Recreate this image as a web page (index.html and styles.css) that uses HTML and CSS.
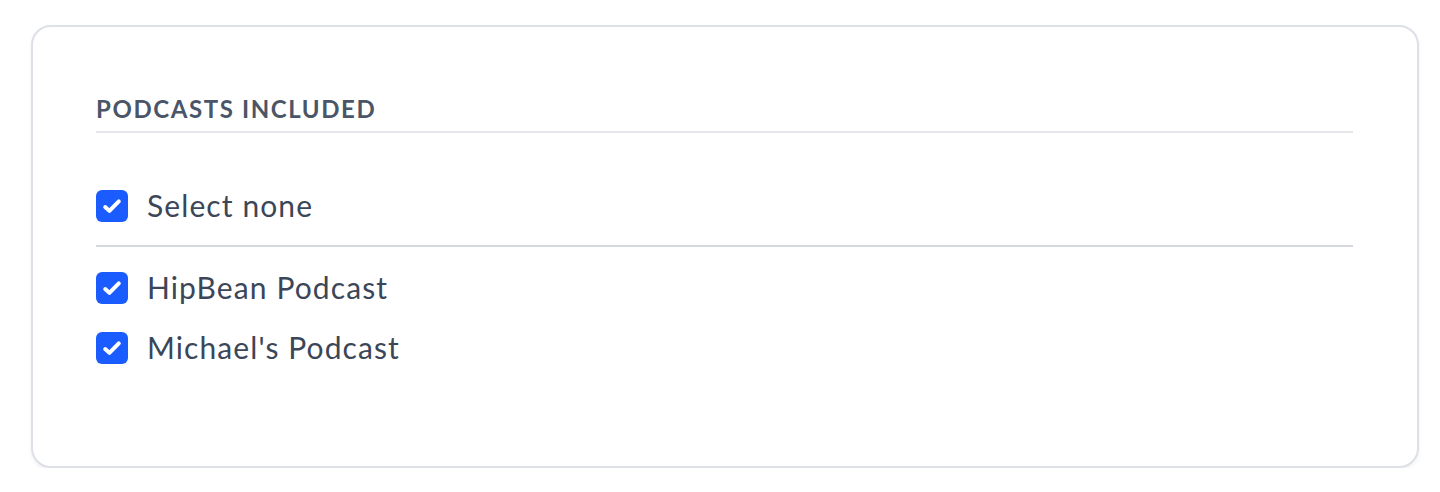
FILE: index.html
```html
<!DOCTYPE html>
<html lang="en">
<head>
  <meta charset="UTF-8">
  <title>Podcasts Included</title>
  <link rel="stylesheet" href="styles.css">
</head>
<body>

<div class="card">
  <h2 class="section-title">Podcasts Included</h2>

  <!-- Toggle all -->
  <label class="option option-all">
    <span class="checkbox">
      <svg viewBox="0 0 32 32" width="32" height="32"><path d="M9.2 17 L13.4 20.9 L22.8 11.4"/></svg>
    </span>
    <span class="option-label">Select none</span>
  </label>

  <div class="option-list">
    <label class="option">
      <span class="checkbox">
        <svg viewBox="0 0 32 32" width="32" height="32"><path d="M9.2 17 L13.4 20.9 L22.8 11.4"/></svg>
      </span>
      <span class="option-label">HipBean Podcast</span>
    </label>
    <label class="option">
      <span class="checkbox">
        <svg viewBox="0 0 32 32" width="32" height="32"><path d="M9.2 17 L13.4 20.9 L22.8 11.4"/></svg>
      </span>
      <span class="option-label">Michael's Podcast</span>
    </label>
  </div>
</div>

</body>
</html>
```

FILE: styles.css
```css
body {
  margin: 0;
  background-color: #ffffff;
  font-family: Lato, "Open Sans", Arial, sans-serif;
}

.card {
  box-sizing: border-box;
  height: 443px;
  margin: 25px 21px 0 31px;
  padding: 0 64px 0 63px;
  background-color: #ffffff;
  border: 2px solid #dde1e7;
  border-radius: 20px;
  box-shadow: 0 2px 4px rgba(0, 0, 0, 0.06);
}

.section-title {
  margin: 0;
  padding: 68px 0 8px;
  font-size: 24px;
  line-height: 28px;
  font-weight: 700;
  letter-spacing: 1.6px;
  text-transform: uppercase;
  color: #4a5568;
  border-bottom: 2px solid #e5e7eb;
}

.option {
  display: flex;
  align-items: center;
  gap: 19px;
  height: 60px;
  cursor: pointer;
}

.option-all {
  margin-top: 43px;
  padding-bottom: 9px;
  border-bottom: 2px solid #d5d9de;
}

.option-list {
  padding-top: 11px;
}

.checkbox {
  display: flex;
  flex-shrink: 0;
  width: 32px;
  height: 32px;
  border-radius: 6px;
  background-color: #1a5cff;
}

.checkbox path {
  fill: none;
  stroke: #ffffff;
  stroke-width: 4;
  stroke-linecap: round;
  stroke-linejoin: round;
}

.option-label {
  margin-bottom: 3px;
  font-size: 30px;
  letter-spacing: 1.1px;
  color: #3b4658;
}
```
